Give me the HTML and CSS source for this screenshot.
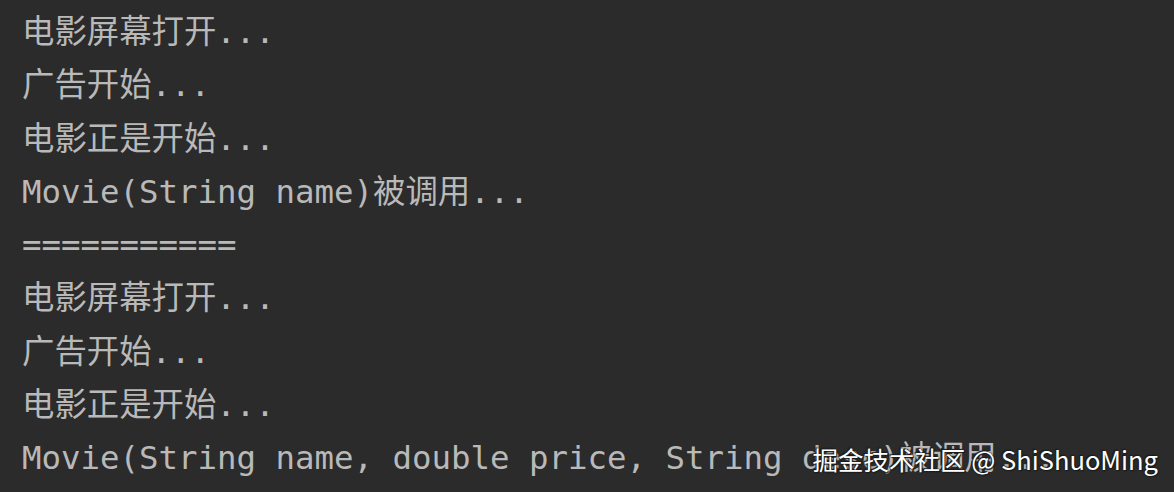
FILE: index.html
```html
<!DOCTYPE html>
<html lang="zh">
<head>
<meta charset="utf-8">
<link rel="stylesheet" href="styles.css">
</head>
<body>
<div class="console">
  <div class="line">电影屏幕打开...</div>
  <div class="line">广告开始...</div>
  <div class="line">电影正是开始...</div>
  <div class="line">Movie(String name)被调用...</div>
  <div class="line">===========</div>
  <div class="line">电影屏幕打开...</div>
  <div class="line">广告开始...</div>
  <div class="line">电影正是开始...</div>
  <div class="line">Movie(String name, double price, String desc)被调用...</div>
  <div class="watermark">掘金技术社区 @ ShiShuoMing</div>
</div>
</body>
</html>
```

FILE: styles.css
```css
html, body {
  margin: 0;
  padding: 0;
  background: #2b2b2b;
}
.console {
  position: relative;
  width: 1174px;
  height: 492px;
  box-sizing: border-box;
  padding: 6px 0 0 22px;
  overflow: hidden;
  font-family: "DejaVu Sans Mono", "Noto Sans CJK SC", monospace;
  font-size: 32.4px;
  color: #b9b9b9;
}
.line {
  height: 53.3px;
  line-height: 53.3px;
  white-space: pre;
}
.watermark {
  position: absolute;
  right: 16px;
  top: 439px;
  font-family: "Noto Sans CJK SC", "Noto Sans", sans-serif;
  font-size: 25.5px;
  line-height: 40px;
  color: #ffffff;
  text-shadow: 0 0 2px #1a1a1a, 1px 1px 1px #1a1a1a, -1px -1px 1px #1a1a1a;
}
```
